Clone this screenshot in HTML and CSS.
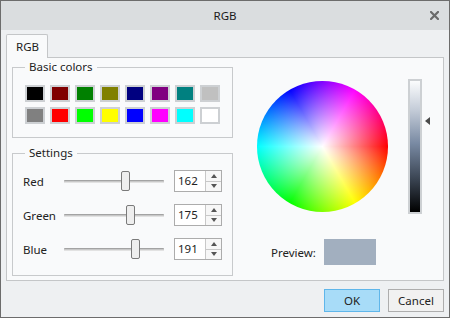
FILE: index.html
```html
<!DOCTYPE html>
<html>
<head>
<meta charset="utf-8">
<link rel="stylesheet" href="styles.css">
</head>
<body>
<div class="win">
  <div class="titlebar">
    <span></span>
    <span class="title">RGB</span>
    <svg class="close" width="9" height="9" viewBox="0 0 9 9"><path d="M1 1 L8 8 M8 1 L1 8" stroke="#6a6a6a" stroke-width="2.2" stroke-linecap="square"/></svg>
  </div>
  <div class="body">
    <div class="tabs"><div class="tab">RGB</div></div>
    <div class="pane">
      <div class="left">
        <div class="group g-basic">
          <div class="gtitle">Basic colors</div>
          <div class="swatches">
            <span class="sw" style="background:#000000"></span>
            <span class="sw" style="background:#800000"></span>
            <span class="sw" style="background:#008000"></span>
            <span class="sw" style="background:#808000"></span>
            <span class="sw" style="background:#000080"></span>
            <span class="sw" style="background:#800080"></span>
            <span class="sw" style="background:#008080"></span>
            <span class="sw" style="background:#c0c0c0"></span>
            <span class="sw" style="background:#808080"></span>
            <span class="sw" style="background:#ff0000"></span>
            <span class="sw" style="background:#00ff00"></span>
            <span class="sw" style="background:#ffff00"></span>
            <span class="sw" style="background:#0000ff"></span>
            <span class="sw" style="background:#ff00ff"></span>
            <span class="sw" style="background:#00ffff"></span>
            <span class="sw" style="background:#ffffff"></span>
          </div>
        </div>
        <div class="group g-settings">
          <div class="gtitle">Settings</div>
          <div class="rows">
            <div class="row">
              <span class="lbl">Red</span>
              <div class="slider"><div class="track"></div><div class="thumb" style="left:57px"></div></div>
              <div class="spin"><span class="val">162</span><div class="arrows"><span class="arr"><i class="up"></i></span><span class="arr"><i class="down"></i></span></div></div>
            </div>
            <div class="row">
              <span class="lbl">Green</span>
              <div class="slider"><div class="track"></div><div class="thumb" style="left:62px"></div></div>
              <div class="spin"><span class="val">175</span><div class="arrows"><span class="arr"><i class="up"></i></span><span class="arr"><i class="down"></i></span></div></div>
            </div>
            <div class="row">
              <span class="lbl">Blue</span>
              <div class="slider"><div class="track"></div><div class="thumb" style="left:67px"></div></div>
              <div class="spin"><span class="val">191</span><div class="arrows"><span class="arr"><i class="up"></i></span><span class="arr"><i class="down"></i></span></div></div>
            </div>
          </div>
        </div>
      </div>
      <div class="right">
        <div class="picker">
          <div class="wheel"></div>
          <div class="bar"></div>
          <div class="marker"></div>
        </div>
        <div class="preview">
          <span class="plabel">Preview:</span>
          <div class="pbox"></div>
        </div>
      </div>
    </div>
    <div class="buttons">
      <button class="btn ok">OK</button>
      <button class="btn">Cancel</button>
    </div>
  </div>
</div>
</body>
</html>
```

FILE: styles.css
```css
* { box-sizing: border-box; }
html, body { margin: 0; padding: 0; }
body {
  font-family: "Noto Sans", "DejaVu Sans", sans-serif;
  font-size: 11.5px;
  color: #222;
  background: #eef0f2;
}
.win {
  width: 450px;
  height: 318px;
  border: 1px solid #6c6c6c;
  background: #eef0f2;
  display: flex;
  flex-direction: column;
}
.titlebar {
  height: 29px;
  background: #dadddf;
  display: grid;
  grid-template-columns: 1fr auto 1fr;
  align-items: center;
}
.title { color: #1a1a1a; }
.close { justify-self: end; margin-right: 10px; }
.body {
  flex: 1;
  padding: 4px 5px 0 5px;
  display: flex;
  flex-direction: column;
}
.tabs { display: flex; height: 23px; }
.tab {
  width: 42px;
  height: 24px;
  border: 1px solid #c4c6c8;
  border-bottom: none;
  border-radius: 2px 2px 0 0;
  background: #f9fafb;
  display: flex;
  align-items: center;
  justify-content: center;
  position: relative;
  z-index: 1;
  padding: 0 0 1px 1px;
}
.pane {
  width: 438px;
  height: 224px;
  border: 1px solid #c4c6c8;
  background: #f9fafb;
  display: flex;
}
.left {
  padding: 9px 0 0 5px;
  display: flex;
  flex-direction: column;
  gap: 15px;
}
.group {
  width: 221px;
  border: 1px solid #c8cacc;
}
.g-basic { height: 71px; }
.g-settings { height: 123px; }
.gtitle {
  display: block;
  width: max-content;
  margin: -9px 0 0 12px;
  padding: 0 4px;
  height: 16px;
  line-height: 16px;
  background: #f9fafb;
}
.swatches {
  margin: 10px 0 0 12px;
  display: grid;
  grid-template-columns: repeat(8, 20px);
  grid-auto-rows: 17px;
  column-gap: 5px;
  row-gap: 5px;
}
.sw {
  display: block;
  border: 2px solid #cdd0d3;
}
.rows {
  margin: 9px 0 0 10px;
  display: flex;
  flex-direction: column;
  gap: 12px;
}
.row {
  height: 22px;
  display: flex;
  align-items: center;
}
.lbl { width: 41px; }
.slider {
  width: 100px;
  height: 22px;
  position: relative;
  display: flex;
  align-items: center;
}
.track {
  width: 100%;
  height: 3px;
  border-top: 1px solid #a3a3a3;
  border-bottom: 1px solid #e2e2e2;
  background: #c8c8c8;
  border-radius: 1px;
}
.thumb {
  position: absolute;
  top: 1px;
  width: 9px;
  height: 20px;
  background: #eeeeee;
  border: 1px solid #7a7a7a;
  border-radius: 2px;
}
.spin {
  margin-left: 10px;
  width: 48px;
  height: 22px;
  border: 1px solid #acacac;
  background: #fff;
  display: flex;
}
.val {
  flex: 1;
  padding-left: 3px;
  line-height: 20px;
}
.arrows {
  width: 16px;
  border-left: 1px solid #c8c8c8;
  display: flex;
  flex-direction: column;
}
.arr {
  flex: 1;
  display: flex;
  align-items: center;
  justify-content: center;
  background: #f7f7f7;
}
.arr + .arr { border-top: 1px solid #c8c8c8; }
.up, .down { width: 0; height: 0; border-left: 3px solid transparent; border-right: 3px solid transparent; }
.up { border-bottom: 4px solid #555; }
.down { border-top: 4px solid #555; }
.right {
  padding: 21px 0 0 24px;
  display: flex;
  flex-direction: column;
}
.picker { display: flex; align-items: flex-start; }
.wheel {
  margin-top: 2px;
  width: 131px;
  height: 131px;
  border-radius: 50%;
  background:
    radial-gradient(closest-side, #fff, rgba(255,255,255,0)),
    conic-gradient(from 90deg, #f00, #ff0, #0f0, #0ff, #00f, #f0f, #f00);
}
.bar {
  margin-left: 20px;
  width: 14px;
  height: 135px;
  border: 2px solid #cdd0d3;
  background: linear-gradient(to bottom, #fbfcfd 0%, #c4ccd8 22%, #7889a2 48%, #3a4452 75%, #000 100%);
}
.marker {
  margin: 38px 0 0 3px;
  width: 0;
  height: 0;
  border-top: 4px solid transparent;
  border-bottom: 4px solid transparent;
  border-right: 5px solid #4a4a4a;
}
.preview {
  margin-top: 25px;
  padding-left: 14px;
  display: flex;
  align-items: center;
}
.plabel { width: 53px; }
.pbox {
  width: 52px;
  height: 26px;
  background: rgb(162, 175, 191);
}
.buttons {
  margin-top: 8px;
  display: flex;
  justify-content: flex-end;
  gap: 8px;
}
.btn {
  font-family: inherit;
  font-size: 11.5px;
  color: #222;
  width: 56px;
  height: 23px;
  padding: 0;
  border: 1px solid #adadad;
  background: #f1f1f1;
  border-radius: 0;
}
.btn.ok {
  background: #a8dcf8;
  border-color: #5fb6ea;
}
```
